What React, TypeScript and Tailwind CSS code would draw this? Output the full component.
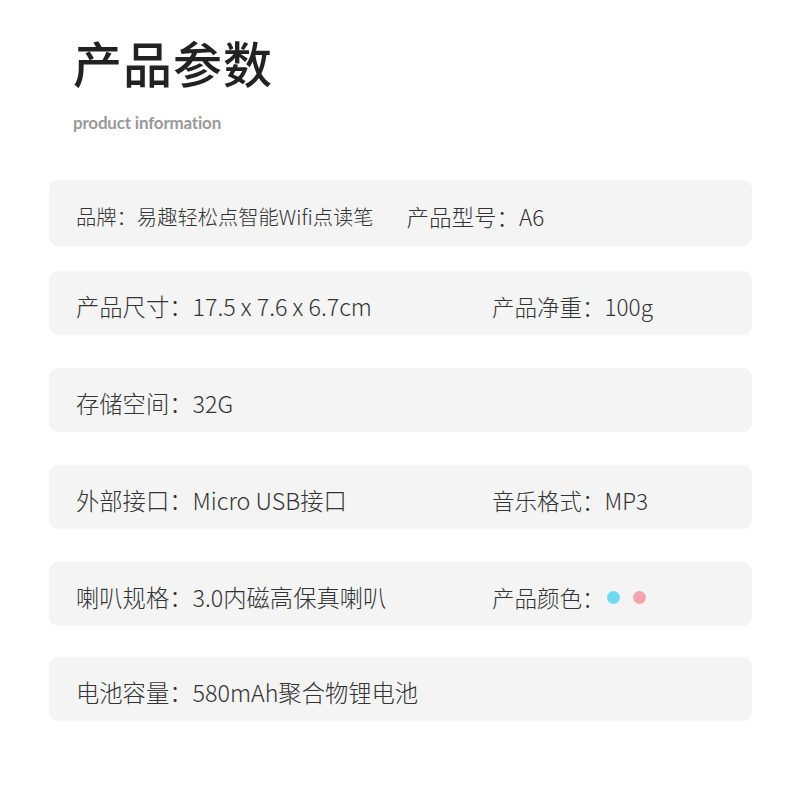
const specs = [
  { label: "产品尺寸：", value: "17.5 x 7.6 x 6.7cm", rlabel: "产品净重：", rvalue: "100g", mt: "mt-[25px]" },
  { label: "存储空间：", value: "32G", mt: "mt-[33px]" },
  { label: "外部接口：", value: "Micro USB接口", rlabel: "音乐格式：", rvalue: "MP3", mt: "mt-[33px]" },
  { label: "喇叭规格：", value: "3.0内磁高保真喇叭", rlabel: "产品颜色：", dots: true, mt: "mt-[33px]" },
  { label: "电池容量：", value: "580mAh聚合物锂电池", mt: "mt-[31px]" },
];

const App = () => {
  return (
    <div
      className="w-[800px] h-[800px] bg-white overflow-hidden"
      style={{ fontFamily: '"Noto Sans CJK SC", "Noto Sans", sans-serif' }}
    >
      <div className="pl-[73px] pt-[30px]">
        <h1 className="text-[49px] leading-[64px] font-medium text-[#222] tracking-[1px]">产品参数</h1>
        <p className="mt-[17px] text-[17px] leading-[24px] font-bold text-[#9a9a9a] font-['Lato',sans-serif] tracking-[-0.2px]">
          product information
        </p>
      </div>
      <div className="mt-[45px] ml-[49px] w-[703px] flex flex-col font-light text-[#333]">
        <div className="h-[66px] flex flex-row items-center rounded-[9px] bg-[#f4f4f4] pl-[27px] pt-[7px]">
          <span className="text-[20.3px]">品牌：易趣轻松点智能Wifi点读笔</span>
          <span className="ml-[33px] text-[22.5px]">产品型号：A6</span>
        </div>
        {specs.map((row, key) => (
          <div
            key={key}
            className={`h-[64px] ${row.mt} flex flex-row items-center rounded-[9px] bg-[#f4f4f4] pl-[27px] pt-[7px]`}
          >
            <span className="w-[416px] text-[23.3px]">
              {row.label}
              {row.value}
            </span>
            {row.rlabel && (
              <span className="flex flex-row items-center text-[22.5px]">
                {row.rlabel}
                {row.rvalue}
                {row.dots && (
                  <>
                    <span className="ml-[2px] w-[13px] h-[13px] rounded-full bg-[#6ed9f2]"></span>
                    <span className="ml-[13px] w-[13px] h-[13px] rounded-full bg-[#f5a4ae]"></span>
                  </>
                )}
              </span>
            )}
          </div>
        ))}
      </div>
    </div>
  );
};

export default App;
